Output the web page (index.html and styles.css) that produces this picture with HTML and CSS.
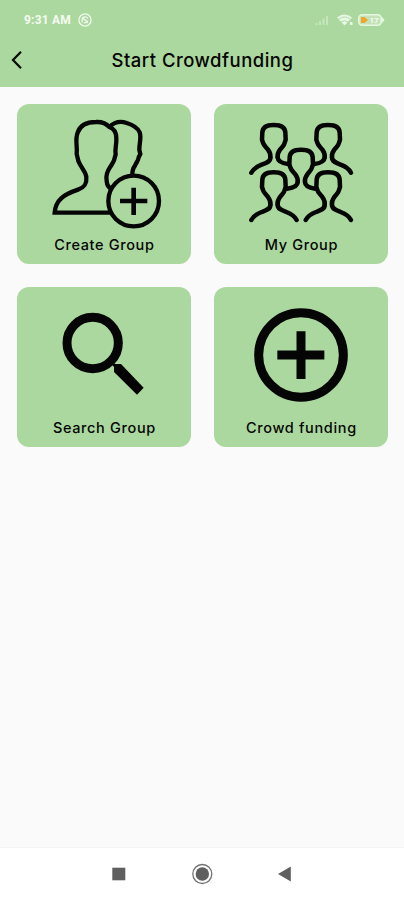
FILE: index.html
```html
<!DOCTYPE html>
<html lang="en">
<head>
  <meta charset="utf-8" />
  <meta name="viewport" content="width=device-width, initial-scale=1">
  <title>Start Crowdfunding</title>
  <link rel="stylesheet" href="styles.css">
</head>
<body>

  <header class="header">
    <div class="status">
      <span class="time">9:31 AM</span>
      <svg class="dnd" width="14" height="14" viewBox="0 0 14 14">
        <circle cx="7" cy="7" r="6.1" />
        <path d="M4.2 9.6V6.6a2.8 2.8 0 0 1 5.4-1M9.7 7.5a2.8 2.8 0 0 1-3.8 2.2M4.2 4.2l5.6 5.6" />
      </svg>
      <svg class="signals" width="72" height="16" viewBox="0 0 72 16">
        <path class="cell" d="M1.5 13v-2M5 13V9M8.500 13V6.500M12 13V4" />
        <path class="wifi" d="M22 5.500q7.500-6 15 0l-7.500 8z" />
        <path class="wifi-gap" d="M23.500 7.200q6-4.500 12 0M26 10q3.500-2.500 7 0" />
        <path class="wifi" d="M35 10h2.500v3H35z" />
        <rect class="battery" x="43.800" y="2.800" width="22.400" height="10.400" rx="3.500" />
        <path class="wifi" d="M67 5l2.500 3L67 11z" />
        <path class="charge" d="M46 5h3.500l3.500 3-3.500 3H46z" />
        <text class="level" x="54.500" y="11">17</text>
      </svg>
    </div>
    <div class="bar">
      <svg class="back" width="12" height="20" viewBox="0 0 12 20">
        <path d="M10 1.800L2 10l8 8.200" />
      </svg>
      <h1 class="title">Start Crowdfunding</h1>
    </div>
  </header>

  <main class="grid">
    <a class="card">
      <svg class="icon" viewBox="21 27 522 390">
        <g class="line person">
          <path d="M306 353H134C137 315 160 299 204 284C224 277 231 267 229 246C228 234 219 224 213 213C209 206 204 201 203 189L200 177C203 155 194 135 203 113C210 91 230 81 258 81C278 80 291 88 298 96C313 101 319 113 319 130C320 149 314 162 317 178L314 189C313 199 307 205 302 214C292 228 287 245 290 258C291 270 296 278 304 282" />
          <path d="M298 96C312 82 331 77 350 84C370 90 382 96 389 112C395 129 387 149 388 165L391 177L386 187C385 198 378 203 375 212C369 220 366 226 367 242" />
        </g>
        <circle class="line person" cx="371" cy="318" r="76" />
        <path class="line plus" d="M371 278v82M330 318h82" />
      </svg>
      <span class="label">Create Group</span>
    </a>

    <a class="card">
      <svg class="icon" viewBox="27 27 522 390">
        <defs>
          <path id="head" d="M-10 90C-8 80-12 74-17 67C-24 58-30 54-32 46L-35 37L-34 15C-33 0-20-7 0-7C20-7 34 0 35 15L36 37L33 46C32 54 26 58 19 67C14 74 10 80 12 90" />
          <path id="left-arm" d="M-10 90C-9 103-22 107-36 112C-54 119-62 126-67 136" />
          <path id="right-arm" d="M12 90C12 103 24 107 38 112C56 119 64 126 69 136" />
        </defs>
        <g class="line people">
          <g transform="translate(206 97)">
            <use href="#head" />
            <use href="#left-arm" />
            <path d="M12 90Q13 106 43 110" />
          </g>
          <g transform="translate(369 97)">
            <use href="#head" />
            <path d="M-10 90Q-11 106-41 110" />
            <use href="#right-arm" />
          </g>
          <g transform="translate(288 171)">
            <use href="#head" />
            <path d="M-10 90Q-10 106-42 110M12 90Q12 106 43 110" />
          </g>
          <g transform="translate(206 239)">
            <use href="#head" />
            <use href="#left-arm" />
            <use href="#right-arm" />
          </g>
          <g transform="translate(369 239)">
            <use href="#head" />
            <use href="#left-arm" />
            <use href="#right-arm" />
          </g>
        </g>
      </svg>
      <span class="label">My Group</span>
    </a>

    <a class="card">
      <svg class="icon" viewBox="21 20 522 390">
        <circle class="line thick" cx="248" cy="188" r="77" />
        <path d="M304 244l12 7h17l68 71-20 21-69-68v-15l-10-12z" />
      </svg>
      <span class="label">Search Group</span>
    </a>

    <a class="card">
      <svg class="icon" viewBox="27 20 522 390">
        <circle class="line thick" cx="288" cy="224" r="127" />
        <path class="line thick" d="M288 153v143M217 224h141" />
      </svg>
      <span class="label">Crowd funding</span>
    </a>
  </main>

  <nav class="nav">
    <svg width="184" height="24" viewBox="0 0 184 24">
      <path d="M2.300 5.700h13v12.600h-13z" />
      <circle class="ring" cx="92.300" cy="12" r="9.500" />
      <circle cx="92.300" cy="12" r="6.700" />
      <path d="M168 12l12.800-7.500v15z" />
    </svg>
  </nav>

</body>
</html>
```

FILE: styles.css
```css
* { box-sizing: border-box; }
body {
  margin: 0;
  height: 900px;
  display: flex;
  flex-direction: column;
  background: #fafafa;
  color: #050505;
  font-family: Inter, "Open Sans", sans-serif;
}

.header { height: 87px; background: #abd89e; }
.status { display: flex; align-items: center; height: 40px; padding: 0 17px 0 24px; }
.time { width: 48px; color: #f4fbf1; font: 700 12px/14px Roboto, sans-serif; letter-spacing: 0.2px; white-space: nowrap; }
.dnd { margin-left: 6px; fill: none; stroke: #f0f9ed; stroke-width: 1.3; }
.signals { margin-left: auto; }
.cell { stroke: #c5e6bc; stroke-width: 2; }
.wifi { fill: #e9f8e4; }
.wifi-gap { fill: none; stroke: #abd89e; stroke-width: 0.9; }
.battery { fill: #c3e2b9; stroke: #e6f7df; stroke-width: 1.6; }
.charge { fill: #f0a52b; }
.level { fill: #f3fbef; font: 700 8px Roboto, sans-serif; }

.bar { display: flex; align-items: center; height: 40px; padding-left: 11px; }
.back { fill: none; stroke: #080808; stroke-width: 2.2; }
.title { margin: 0 0 0 88.5px; font-size: 18.5px; line-height: 24px; font-weight: 500; letter-spacing: 0.48px; white-space: nowrap; }

.grid {
  flex: 1;
  display: grid;
  grid-template-columns: 174px 174px;
  grid-auto-rows: 160px;
  align-content: start;
  gap: 23px;
  padding: 17.4px 0 0 17.4px;
}
.card { display: flex; flex-direction: column; align-items: center; border-radius: 12px; background: #abd89e; }
.icon { display: block; width: 174px; height: 130px; }
.line { fill: none; stroke: #050505; }
.person { stroke-width: 13; }
.plus { stroke-width: 14; }
.people { stroke-width: 13.5; stroke-linecap: round; }
.thick { stroke-width: 27; }
.label { margin-top: 1px; font-size: 14.5px; line-height: 20px; font-weight: 500; letter-spacing: 0.65px; white-space: nowrap; }

.nav { display: flex; justify-content: center; align-items: center; height: 53px; padding-bottom: 1px; border-top: 1px solid #f3f3f3; background: #fff; fill: #5f5f5f; }
.ring { fill: none; stroke: #737373; stroke-width: 1.3; }
```
